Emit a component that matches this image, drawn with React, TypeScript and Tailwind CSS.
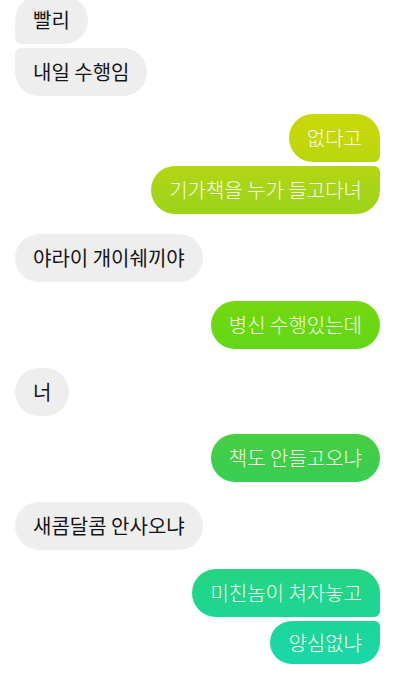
import React from 'react'

type Msg = {
    text: string
    me: boolean
    // corner that touches the neighbouring bubble of the same group
    corner?: 'tl' | 'bl' | 'tr' | 'br'
    gap: string
    h?: string
}

const messages: Msg[] = [
    { text: '빨리', me: false, corner: 'bl', gap: '-mt-[4px]' },
    { text: '내일 수행임', me: false, corner: 'tl', gap: 'mt-[4px]' },
    { text: '없다고', me: true, corner: 'br', gap: 'mt-[18px]' },
    { text: '기가책을 누가 들고다녀', me: true, corner: 'tr', gap: 'mt-[4px]' },
    { text: '야라이 개이쉐끼야', me: false, gap: 'mt-[20px]' },
    { text: '병신 수행있는데', me: true, gap: 'mt-[19px]' },
    { text: '너', me: false, gap: 'mt-[19px]' },
    { text: '책도 안들고오냐', me: true, gap: 'mt-[18px]' },
    { text: '새콤달콤 안사오냐', me: false, gap: 'mt-[20px]' },
    { text: '미친놈이 쳐자놓고', me: true, corner: 'br', gap: 'mt-[19px]' },
    { text: '양심없냐', me: true, corner: 'tr', gap: 'mt-[4px]', h: 'h-[43px]' },
]

const cornerClass = {
    tl: 'rounded-tl-[6px]',
    bl: 'rounded-bl-[6px]',
    tr: 'rounded-tr-[6px]',
    br: 'rounded-br-[6px]',
}

function Bubble({ msg }: { msg: Msg }) {
    const base = `flex items-center rounded-[24px] px-[18px] leading-none text-[20px] whitespace-nowrap ${msg.h ?? 'h-12'} ${msg.corner ? cornerClass[msg.corner] : ''}`
    if (msg.me) {
        return (
            <div className={`flex justify-end ${msg.gap}`}>
                <div
                    className={`${base} bg-fixed bg-[linear-gradient(to_bottom,#d2da00_8%,#c3d70b_21%,#a4d41a_29%,#6bd811_48%,#3fcd4b_68%,#20d58c_88%,#1bd6a6_97%)] text-[#f3fbea] font-light`}
                >
                    {msg.text}
                </div>
            </div>
        )
    }
    return (
        <div className={`flex justify-start ${msg.gap}`}>
            <div className={`${base} bg-[#eeeeee] text-[#151515]`}>{msg.text}</div>
        </div>
    )
}

export default function App() {
    return (
        <div
            className="w-[416px] h-[675px] overflow-hidden bg-white pl-[15px] pr-[36px]"
            style={{ fontFamily: '"Noto Sans CJK KR", "Noto Sans", sans-serif' }}
        >
            <div className="flex flex-col">
                {messages.map((m, i) => (
                    <Bubble key={i} msg={m} />
                ))}
            </div>
        </div>
    )
}
